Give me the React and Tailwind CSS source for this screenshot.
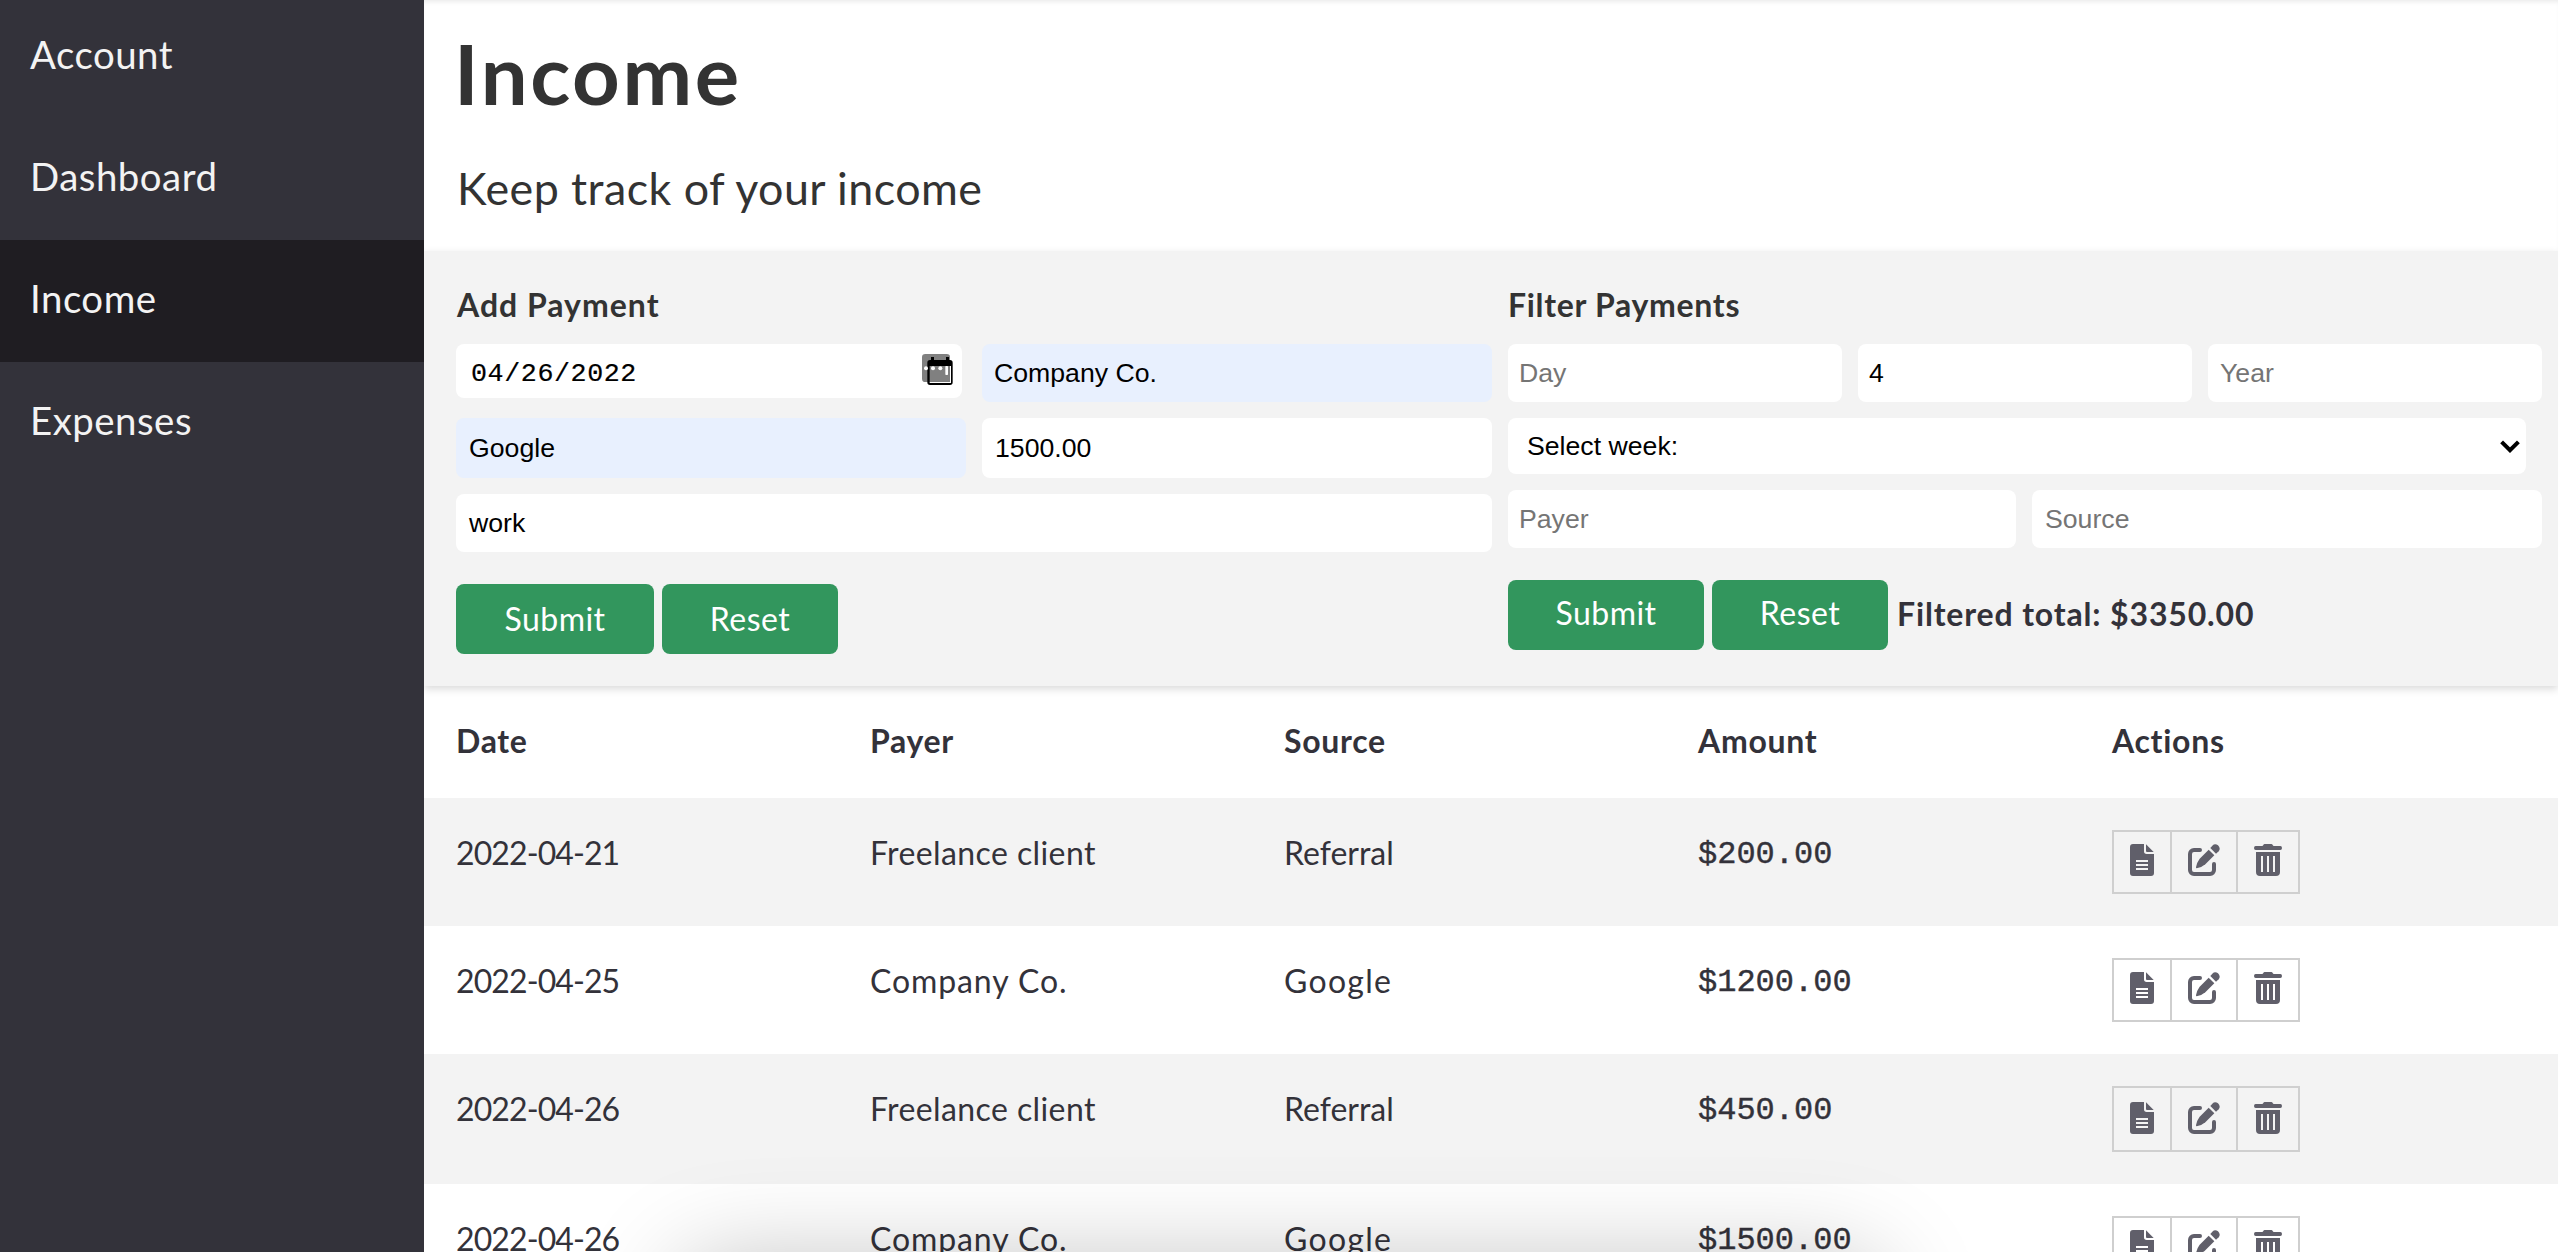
const NAV = ["Account", "Dashboard", "Income", "Expenses"];

const ROWS = [
  { date: "2022-04-21", payer: "Freelance client", source: "Referral", amount: "$200.00", row: "h-[128px] bg-[#f3f3f3]", box: "h-16", pad: "pt-3" },
  { date: "2022-04-25", payer: "Company Co.", source: "Google", amount: "$1200.00", row: "h-[128px] bg-white", box: "h-16", pad: "pt-3" },
  { date: "2022-04-26", payer: "Freelance client", source: "Referral", amount: "$450.00", row: "h-[130px] bg-[#f3f3f3]", box: "h-[66px]", pad: "pt-3.5" },
  { date: "2022-04-26", payer: "Company Co.", source: "Google", amount: "$1500.00", row: "h-[128px] bg-white", box: "h-16", pad: "pt-3" },
];

const TRACKING = {
  "Freelance client": "tracking-[0.4px]",
  "Company Co.": "tracking-[0.9px]",
  Google: "tracking-[1.3px]",
  Referral: "tracking-normal",
};

function DocIcon() {
  return (
    <svg className="block h-8 w-6 shrink-0" viewBox="0 0 72 96" fill="currentColor">
      <path fillRule="evenodd" d="M9 0H42V22a8 8 0 0 0 8 8H72V87a9 9 0 0 1-9 9H9a9 9 0 0 1-9-9V9a9 9 0 0 1 9-9ZM18 48v6h36v-6ZM18 60v6h36v-6ZM18 72v6h36v-6Z" />
      <path d="M48 1 71 24H51a3 3 0 0 1-3-3Z" />
    </svg>
  );
}

function EditIcon() {
  return (
    <svg className="block size-8 shrink-0" viewBox="0 0 96 96" fill="currentColor">
      <path d="M36 18H18A12 12 0 0 0 6 30V78A12 12 0 0 0 18 90H66A12 12 0 0 0 78 78V60" fill="none" stroke="currentColor" strokeWidth="12" strokeLinecap="round" />
      <path d="M62 17 79 34 52 61Q42 70 26 73Q24 73 24 70Q27 54 35 44Z" />
      <path d="M67 12 73 5Q81-3 90 4Q99 13 92 22L84 29Z" />
    </svg>
  );
}

function TrashIcon() {
  return (
    <svg className="block h-8 w-7 shrink-0" viewBox="0 0 84 96" fill="currentColor">
      <path d="M5 6H24Q27 6 28 3Q29 0 32 0H52Q55 0 56 3Q57 6 60 6H79Q84 6 84 12Q84 18 79 18H5Q0 18 0 12Q0 6 5 6Z" />
      <path fillRule="evenodd" d="M6 24H78V84A12 12 0 0 1 66 96H18A12 12 0 0 1 6 84ZM21 36V84H27V36ZM39 36V84H45V36ZM57 36V84H63V36Z" />
    </svg>
  );
}

function CalendarIcon() {
  return (
    <svg className="block h-[31px] w-[31px]" viewBox="0 0 93 93">
      <rect x="0" y="0" width="84" height="84" rx="10" fill="#808080" />
      <path d="M27 9h9v9h36V9h9v9h3a8 8 0 0 1 8 8v59a8 8 0 0 1-8 8H24a8 8 0 0 1-8-8V26a8 8 0 0 1 8-8h3Z" fill="#000" />
      <path d="M23 36H84V84H23Z" fill="#808080" />
      <path d="M84 36h3v51H23v-3h61Z" fill="#fff" />
      <g fill="#fff">
        <circle cx="12" cy="43" r="6" />
        <circle cx="33" cy="43" r="6" />
        <circle cx="55" cy="43" r="6" />
        <rect x="70" y="36" width="8" height="27" rx="2" />
      </g>
    </svg>
  );
}

function Field({ children, className = "" }) {
  return (
    <div className={`flex items-center rounded-lg px-3 font-['Liberation_Sans',Arial,sans-serif] text-[26.67px] leading-[30px] ${className}`}>
      {children}
    </div>
  );
}

function Button({ children, className }) {
  return (
    <button className={`flex h-[70px] justify-center rounded-lg bg-[#32965d] text-[32px] leading-[40px] tracking-[0.45px] text-white ${className}`}>
      {children}
    </button>
  );
}

function Sidebar() {
  return (
    <nav className="relative z-10 flex h-full w-[424px] shrink-0 flex-col bg-[#33323a] text-[#f3f3f3]">
      {NAV.map((item) => (
        <a
          key={item}
          className={`flex h-[122px] items-center pb-1.5 pl-[30px] text-[38.4px] leading-[48px] tracking-[0.5px] first:h-[118px] first:pb-2.5 ${item === "Income" ? "bg-[#1f1d22]" : ""}`}
        >
          {item}
        </a>
      ))}
    </nav>
  );
}

function AddPayment() {
  return (
    <section className="w-[1036px]">
      <h2 className="pl-px text-[32px] leading-[40px] font-bold tracking-[1px]">Add Payment</h2>
      <div className="mt-[19px] flex h-[58px] items-start justify-between">
        <Field className="h-[54px] w-[506px] items-start justify-between bg-white pt-2.5 pr-[9px] pl-[15px] text-black">
          <span className="pt-[5px] font-['Liberation_Mono',monospace] text-[26.67px] tracking-[0.6px] [-webkit-text-stroke:0.2px]">04/26/2022</span>
          <CalendarIcon />
        </Field>
        <Field className="h-[58px] w-[510px] bg-[#e8f0fe] text-black">Company Co.</Field>
      </div>
      <div className="mt-4 flex h-[60px] justify-between">
        <Field className="w-[510px] bg-[#e8f0fe] pl-[13px] text-black">Google</Field>
        <Field className="w-[510px] bg-white pl-[13px] text-black">1500.00</Field>
      </div>
      <Field className="mt-4 h-[58px] bg-white pl-[13px] text-black">work</Field>
      <div className="mt-8 flex gap-2">
        <Button className="w-[198px] pt-[15px]">Submit</Button>
        <Button className="w-[176px] pt-[15px]">Reset</Button>
      </div>
    </section>
  );
}

function FilterPayments() {
  return (
    <section className="w-[1034px]">
      <h2 className="text-[32px] leading-[40px] font-bold tracking-[0.7px]">Filter Payments</h2>
      <div className="mt-[19px] flex h-[58px] justify-between text-[#757575]">
        <Field className="w-[334px] bg-white pl-[11px]">Day</Field>
        <Field className="w-[334px] bg-white pl-[11px] text-black">4</Field>
        <Field className="w-[334px] bg-white">Year</Field>
      </div>
      <Field className="mt-4 h-14 w-[1018px] justify-between bg-white pr-1.5 pl-[19px] text-black">
        <span>Select week:</span>
        <svg className="block h-[13px] w-5" viewBox="0 0 20 13" fill="none" stroke="#000" strokeWidth="4">
          <path d="M1.6 1.8 10 10.2 18.4 1.8" />
        </svg>
      </Field>
      <div className="mt-4 flex h-[58px] justify-between text-[#757575]">
        <Field className="w-[508px] bg-white pl-[11px]">Payer</Field>
        <Field className="w-[510px] bg-white pl-[13px]">Source</Field>
      </div>
      <div className="mt-8 flex gap-2">
        <Button className="w-[196px] pt-[13px]">Submit</Button>
        <Button className="w-[176px] pt-[13px]">Reset</Button>
        <p className="pt-[14px] pl-px text-[32px] leading-[40px] font-bold tracking-[0.85px] text-[#33323a]">Filtered total: $3350.00</p>
      </div>
    </section>
  );
}

function Table() {
  return (
    <div className="text-[32px] leading-[40px] text-[#33323a]">
      <div className="grid h-28 grid-cols-[repeat(5,414px)] bg-white pt-[35px] pl-8 font-bold tracking-[0.7px]">
        <span>Date</span>
        <span>Payer</span>
        <span>Source</span>
        <span>Amount</span>
        <span>Actions</span>
      </div>
      {ROWS.map((r, i) => (
        <div key={i} className={`grid grid-cols-[repeat(5,414px)] pl-8 ${r.row}`}>
          <span className="pt-[35px] tracking-[-0.9px]">{r.date}</span>
          <span className={`pt-[35px] ${TRACKING[r.payer]}`}>{r.payer}</span>
          <span className={`pt-[35px] ${TRACKING[r.source]}`}>{r.source}</span>
          <span className="pt-[37px] font-['Liberation_Mono',monospace] text-[32px] [-webkit-text-stroke:0.4px]">{r.amount}</span>
          <div className={`mt-8 flex w-[188px] divide-x-2 divide-[#cfcfcf] border-2 border-[#cfcfcf] text-[#605f6a] ${r.box}`}>
            <span className={`w-[58px] pl-4 ${r.pad}`}><DocIcon /></span>
            <span className={`w-[66px] pl-4 ${r.pad}`}><EditIcon /></span>
            <span className={`w-[60px] pl-4 ${r.pad}`}><TrashIcon /></span>
          </div>
        </div>
      ))}
    </div>
  );
}

export default function App() {
  return (
    <div className="relative flex h-[1252px] w-[2558px] overflow-hidden bg-white font-[Lato,sans-serif] text-[#333]">
      <Sidebar />
      <main className="flex-1">
        <header className="h-[251px] pl-[33px] shadow-[inset_0_4px_4px_-2px_rgba(0,0,0,0.08)]">
          <h1 className="-ml-[3px] pt-[23px] text-[83.2px] leading-[100px] font-bold tracking-[2.6px]">Income</h1>
          <p className="pt-[38px] text-[44.8px] leading-[54px] tracking-[0.45px]">Keep track of your income</p>
        </header>
        <div className="relative flex h-[435px] gap-4 bg-[#f3f3f3] pt-[34px] pl-8 shadow-[0_3px_8px_rgba(0,0,0,0.15)]">
          <AddPayment />
          <FilterPayments />
        </div>
        <Table />
      </main>
      <div className="absolute top-[1262px] left-[680px] h-40 w-[1200px] rounded-[40px] shadow-[0_0_100px_rgba(0,0,0,0.25)]" />
    </div>
  );
}
